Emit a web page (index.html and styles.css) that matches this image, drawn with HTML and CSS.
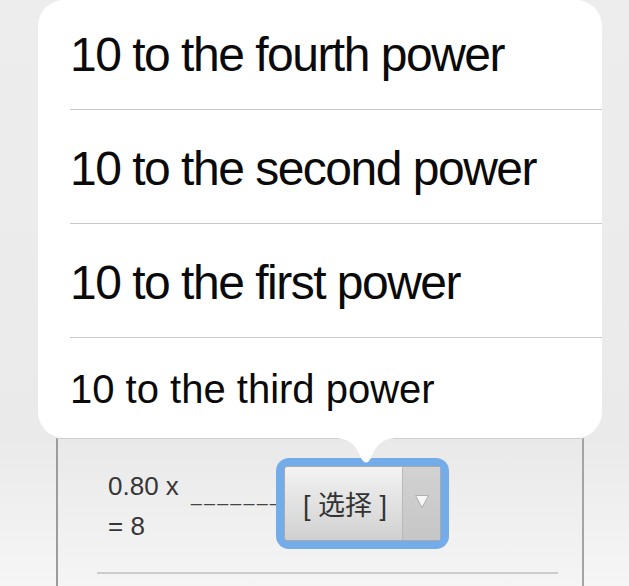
FILE: index.html
```html
<!DOCTYPE html>
<html>
<head>
<meta charset="utf-8">
<link rel="stylesheet" href="styles.css">
</head>
<body>
<div class="content">
  <div class="card">
    <div class="question">
      <div class="stem">0.80 x <span class="blank">_______</span> = 8</div>
      <div class="ring">
        <div class="select">
          <span class="label">[ 选择 ]</span>
          <span class="arrow">
            <svg width="16" height="16" viewBox="0 0 16 16"><path d="M1.5 2.5 L14.5 2.5 L8 14.5 Z" fill="#f7f7f7" stroke="#b0b0b0" stroke-width="1" stroke-linejoin="round"/></svg>
          </span>
        </div>
      </div>
    </div>
    <div class="rule"></div>
  </div>
</div>

<div class="popover">
  <ul class="options">
    <li class="option">10 to the fourth power</li>
    <li class="option">10 to the second power</li>
    <li class="option">10 to the first power</li>
    <li class="option last">10 to the third power</li>
  </ul>
</div>
<svg class="pointer" width="64" height="32" viewBox="0 0 64 32"><path d="M0 2 C18 2 23 12 27 22 Q32 31 37 22 C41 12 46 2 64 2 L64 0 L0 0 Z" fill="#ffffff"/></svg>
</body>
</html>
```
FILE: styles.css
```css
html, body {
  margin: 0;
  padding: 0;
}
body {
  width: 629px;
  height: 586px;
  overflow: hidden;
  position: relative;
  background: linear-gradient(to bottom, #ededed 0, #eaeaea 440px, #f6f6f6 586px);
  font-family: "Liberation Sans", Arial, "Noto Sans CJK SC", sans-serif;
}
.content {
  padding-top: 438px;
}
.card {
  margin-left: 56px;
  width: 524px;
  height: 148px;
  border-left: 2px solid #9c9c9c;
  border-right: 2px solid #a4a4a4;
  border-top: 1px solid #cfcfcf;
  background: linear-gradient(to bottom, #e9e9e9, #f5f5f5 148px);
}
.question {
  display: flex;
  align-items: flex-start;
  padding: 19px 0 0 50px;
}
.stem {
  flex: none;
  width: 180px;
  margin-top: 8px;
  font-size: 26px;
  line-height: 40px;
  color: #363636;
}
.blank {
  margin-left: 5px;
  font-size: 19px;
  line-height: 0;
  letter-spacing: 2.6px;
  vertical-align: -6px;
  color: #444;
}
.ring {
  flex: none;
  width: 157px;
  height: 75px;
  padding: 8px;
  margin-left: -12px;
  border-radius: 13px;
  background: #74abe9;
}
.select {
  display: flex;
  height: 73px;
  border: 1px solid #a9a9a9;
  border-radius: 3px;
  background: linear-gradient(to bottom, #f3f3f3, #d0d0d0);
}
.label {
  width: 114px;
  display: flex;
  align-items: center;
  justify-content: center;
  padding-left: 3px;
  font-size: 27px;
  color: #333;
}
.arrow {
  flex: 1;
  display: flex;
  align-items: center;
  justify-content: center;
  padding-bottom: 6px;
  border-left: 1px solid #b9b9b9;
  background: linear-gradient(to bottom, #d2d2d2, #c6c6c6);
}
.arrow svg {
  display: block;
}
.rule {
  margin: 23px 24px 0 39px;
  height: 2px;
  background: #cdcdcd;
}
.popover {
  position: absolute;
  left: 38px;
  top: 0;
  width: 564px;
  height: 438px;
  border-radius: 26px;
  overflow: hidden;
  background: #ffffff;
}
.options {
  list-style: none;
  margin: -4px 0 0 0;
  padding: 0;
}
.option {
  margin-left: 32px;
  height: 114px;
  padding-top: 4px;
  box-sizing: border-box;
  line-height: 109px;
  border-bottom: 1px solid #c8c8c8;
  font-size: 48px;
  letter-spacing: -1.5px;
  color: #0a0a0a;
  white-space: nowrap;
}
.option.last {
  border-bottom: none;
  padding-top: 0;
  font-size: 40px;
  letter-spacing: 0;
  line-height: 102px;
}
.pointer {
  position: absolute;
  left: 334px;
  top: 436px;
}
```
